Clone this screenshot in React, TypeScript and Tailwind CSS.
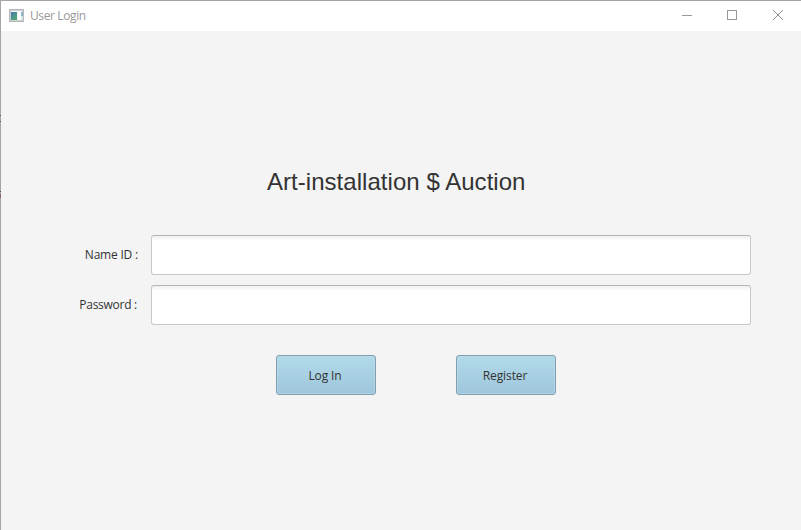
import React from "react";

function AppIcon() {
  return (
    <svg className="-mt-0.5" width="15" height="13" viewBox="0 0 15 13" shapeRendering="crispEdges">
      <defs>
        <linearGradient id="screen" x1="0" y1="0" x2="0.6" y2="1">
          <stop offset="0" stopColor="#3f78ae" />
          <stop offset="1" stopColor="#55a673" />
        </linearGradient>
      </defs>
      <rect width="15" height="13" fill="#b4b7ba" />
      <rect x="1" y="1" width="13" height="11" fill="#cdd1d4" />
      <rect x="2" y="2" width="11" height="9" fill="#f1f3f5" />
      <rect x="2" y="3" width="6" height="8" fill="url(#screen)" />
      <rect x="9" y="3" width="3" height="8" fill="#ffffff" />
      <rect x="12" y="3" width="2" height="4" fill="#8fb3c8" />
      <rect x="12" y="7" width="2" height="4" fill="#dce6e4" />
    </svg>
  );
}

function TitleBar() {
  return (
    <header className="flex h-[30px] shrink-0 items-center bg-white pl-2 text-[#999999]">
      <AppIcon />
      <span className="ml-1.5 text-[12px] leading-4 tracking-[-0.38px]">User Login</span>
      <div className="ml-auto flex pb-0.5">
        <button aria-label="Minimize" className="flex h-7 w-[45px] items-center justify-center">
          <svg width="10" height="10" shapeRendering="crispEdges"><path d="M0 5.5h10" stroke="#999" /></svg>
        </button>
        <button aria-label="Maximize" className="flex h-7 w-[46px] items-center justify-center">
          <svg width="10" height="10" shapeRendering="crispEdges"><path d="M.5 .5h9v9h-9z" fill="none" stroke="#999" /></svg>
        </button>
        <button aria-label="Close" className="flex h-7 w-[46px] items-center justify-center">
          <svg width="10" height="10"><path d="M0 0l10 10M10 0l-10 10" stroke="#8c8c8c" /></svg>
        </button>
      </div>
    </header>
  );
}

function Field({ label, type, spacing }: { label: string; type: string; spacing: string }) {
  return (
    <label className="flex h-10 items-center">
      <span className={`w-[137px] shrink-0 text-right leading-4 whitespace-nowrap ${spacing}`}>{label}</span>
      <input
        type={type}
        className="ml-[13px] h-10 w-[600px] rounded-[3px] border border-[#c8c8c8] border-t-[#b5b5b5] bg-linear-to-b from-[#f0f0f0] to-white to-[5px] px-2 outline-none"
      />
    </label>
  );
}

function ActionButton({ children }: { children: React.ReactNode }) {
  return (
    <button className="h-10 w-[100px] rounded-[3px] border border-[#829fae] bg-linear-to-b from-[#b1daea] to-[#9fc6db] pt-0.5 pr-0.5 leading-4 tracking-[-0.1px] shadow-[inset_0_0_0_1px_#b9deed99]">
      {children}
    </button>
  );
}

/* Slivers of the window behind, showing along the left border. */
function EdgeMarks() {
  return (
    <div className="absolute top-0 left-0 h-full w-px">
      <i className="absolute top-[115px] h-px w-px bg-[#3f5f5c]" />
      <i className="absolute top-[121px] h-px w-px bg-[#3f5f5c]" />
      <i className="absolute top-[191px] h-px w-px bg-[#544a5c]" />
      <i className="absolute top-[194px] h-1 w-px bg-linear-to-b from-[#66708c] to-[#a05c50]" />
    </div>
  );
}

export default function App() {
  return (
    <div className="relative h-[530px] w-[801px] overflow-hidden">
      <div className="flex h-full w-full flex-col border-t border-l border-[#a5a5a5] bg-[#f4f4f4] font-['Open_Sans',sans-serif] text-[12px] text-[#333333]">
        <TitleBar />
        <main className="flex flex-1 flex-col">
          <h1 className="mt-[135px] ml-[266px] font-['Liberation_Sans',sans-serif] text-[24px] leading-8 tracking-[0.04px] whitespace-nowrap">
            Art-installation $ Auction
          </h1>
          <div className="mt-[37px] flex flex-col gap-2.5">
            <Field label="Name ID :" type="text" spacing="tracking-[-0.2px]" />
            <Field label="Password :" type="password" spacing="tracking-[-0.27px] pr-px" />
          </div>
          <div className="mt-[30px] ml-[275px] flex gap-20">
            <ActionButton>Log In</ActionButton>
            <ActionButton>Register</ActionButton>
          </div>
        </main>
      </div>
      <EdgeMarks />
    </div>
  );
}
